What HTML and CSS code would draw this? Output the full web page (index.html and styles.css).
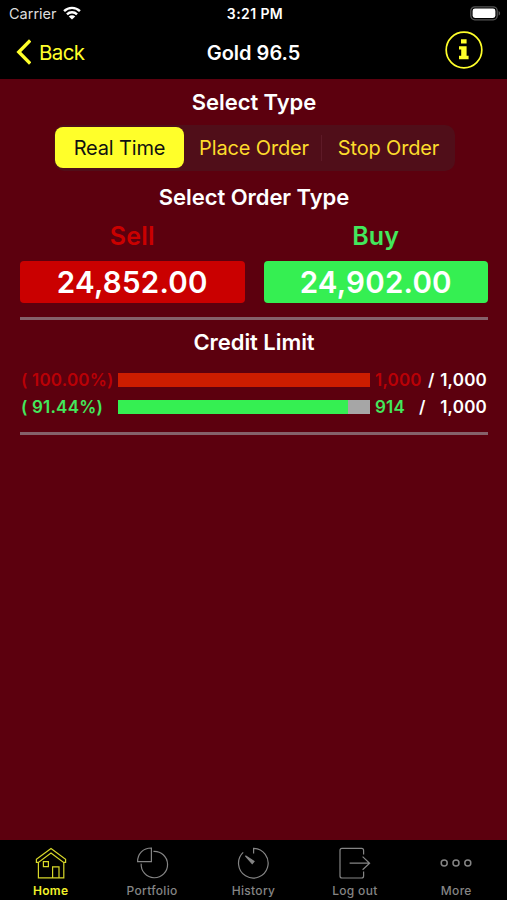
FILE: index.html
```html
<!DOCTYPE html>
<html lang="en">
<head>
    <meta charset="UTF-8">
    <meta name="viewport" content="width=device-width, initial-scale=1.0">
    <title>Gold 96.5</title>
    <link rel="stylesheet" href="styles.css">
</head>
<body>
    <header>
        <div class="status">
            <div class="carrier">
                <span>Carrier</span>
                <svg width="18" height="14" viewBox="0 0 20 15" fill="none" stroke="#fff" stroke-width="2.7">
                    <path d="M1.2 5.4a12.6 12.6 0 0 1 17.6 0" />
                    <path d="M4.4 9a8 8 0 0 1 11.2 0" />
                    <path d="M10 14.6L6.4 11.4a5 5 0 0 1 7.2 0z" fill="#fff" stroke="none" />
                </svg>
            </div>
            <span class="clock">3:21 PM</span>
            <svg class="battery" width="31" height="15" viewBox="0 0 31 15">
                <rect x="0.8" y="0.8" width="26.4" height="13" rx="4" fill="none" stroke="#555" stroke-width="1.3" />
                <rect x="2.6" y="2.6" width="22.8" height="9.4" rx="2.4" fill="#fff" />
                <path d="M28.6 5v4.6c2-0.8 2-3.8 0-4.6z" fill="#555" />
            </svg>
        </div>
        <nav class="navbar">
            <a class="back">
                <svg width="16" height="26" viewBox="0 0 16 26" fill="none" stroke="#ffff2a" stroke-width="3.4">
                    <path d="M15.2 1.4L3.8 13l11.4 11.6" />
                </svg>
                <span>Back</span>
            </a>
            <h1>Gold 96.5</h1>
            <svg class="info" width="38" height="38" viewBox="0 0 38 38">
                <circle cx="19" cy="19" r="17.8" fill="none" stroke="#ffff2a" stroke-width="1.7" />
                <path d="M16 8.200h5.600v4.400H16zM14 15.200h7.600v9.600h2v3.400H14v-3.400h2.200v-6.200H14z" fill="#ffff2a" />
            </svg>
        </nav>
    </header>

    <main>
        <h2>Select Type</h2>
        <div class="segments">
            <button class="segment active">Real Time</button>
            <button class="segment">Place Order</button>
            <button class="segment last">Stop Order</button>
        </div>

        <h2 class="order-title">Select Order Type</h2>
        <div class="prices">
            <div class="price sell">
                <h3>Sell</h3>
                <button>24,852.00</button>
            </div>
            <div class="price buy">
                <h3>Buy</h3>
                <button>24,902.00</button>
            </div>
        </div>

        <section class="credit">
            <h2>Credit Limit</h2>
            <div class="limit limit-sell">
                <span class="percent">( 100.00%)</span>
                <div class="bar"><div class="fill" style="width: 100%"></div></div>
                <span class="used">1,000</span>
                <span class="slash">/</span>
                <span class="total">1,000</span>
            </div>
            <div class="limit limit-buy">
                <span class="percent">( 91.44%)</span>
                <div class="bar"><div class="fill" style="width: 91.44%"></div></div>
                <span class="used">914</span>
                <span class="slash">/</span>
                <span class="total">1,000</span>
            </div>
        </section>
    </main>

    <footer>
        <a class="tab active">
            <svg width="34" height="34" viewBox="0 0 34 34">
                <path d="M2.4 13.2L17 2.6l14.6 10.6v3.2h-2L17 7 4.4 16.4h-2zM4.4 16.4v15.4h25.400V16.4M18.6 31.800V20.800h6.400v11M9.400 15.600h5v5h-5z" />
            </svg>
            <span>Home</span>
        </a>
        <a class="tab">
            <svg width="34" height="34" viewBox="0 0 34 34">
                <path d="M16.400 2v13.600H2.600C2.600 8 8 2 16.400 2zM18.400 5.400A13.200 13.200 0 1 1 6.200 17.600" />
            </svg>
            <span>Portfolio</span>
        </a>
        <a class="tab">
            <svg width="34" height="34" viewBox="0 0 34 34">
                <path d="M17.600 7.600V2.400A14.800 14.800 0 1 1 7.200 6.400" />
                <path class="hand" d="M9.400 9.800l8.600 5.600-1.800 2.200z" />
            </svg>
            <span>History</span>
        </a>
        <a class="tab">
            <svg width="34" height="34" viewBox="0 0 34 34">
                <path d="M25.600 8.400V4.400q0-2-2-2H4q-2 0-2 2v25.600q0 2 2 2h19.600q2 0 2-2v-4.600M11.600 17.200h20M24.600 10.600l7 6.600-7 6.600" />
            </svg>
            <span>Log out</span>
        </a>
        <a class="tab more">
            <svg width="34" height="34" viewBox="0 0 34 34">
                <circle cx="5.200" cy="17" r="3" />
                <circle cx="17" cy="17" r="3" />
                <circle cx="28.800" cy="17" r="3" />
            </svg>
            <span>More</span>
        </a>
    </footer>
</body>
</html>
```

FILE: styles.css
```css
* {
    box-sizing: border-box;
}

body {
    margin: 0;
    height: 900px;
    display: flex;
    flex-direction: column;
    background: #5c000e;
    color: #fff;
    font-family: Inter, "Liberation Sans", sans-serif;
}

h1, h2, h3 {
    margin: 0;
    font-weight: 600;
}

button {
    padding: 0;
    border: none;
    font-family: inherit;
}

svg {
    display: block;
}

header {
    height: 79px;
    background: #000;
}

.status {
    display: grid;
    grid-template-columns: 1fr auto 1fr;
    align-items: center;
    height: 27px;
    padding: 0 6px 0 9px;
    font-size: 14.5px;
}

.carrier {
    display: flex;
    align-items: center;
    column-gap: 6px;
    color: #ddd;
}

.carrier svg {
    margin-top: -2px;
}

.clock {
    font-weight: 600;
    font-size: 14px;
    letter-spacing: 0.4px;
}

.battery {
    justify-self: end;
}

.navbar {
    display: grid;
    grid-template-columns: 1fr auto 1fr;
    align-items: center;
    height: 50px;
    padding: 0 24px;
}

.back {
    display: flex;
    align-items: center;
    column-gap: 8px;
    margin-left: -9px;
    color: #ffff2a;
    font-size: 20.5px;
    letter-spacing: -0.6px;
}

h1 {
    font-size: 20px;
    line-height: 26px;
    padding-top: 1px;
}

.info {
    justify-self: end;
    margin-top: -4px;
}

main {
    flex: 1;
    padding: 10px 19px 0 20px;
}

h2 {
    font-size: 22px;
    line-height: 26px;
    text-align: center;
    letter-spacing: -0.05px;
}

.segments {
    display: grid;
    grid-template-columns: 130px 138px 133px;
    width: 401px;
    height: 46px;
    margin: 10px 0 0 34px;
    border-radius: 10px;
    background: #500e19;
}

.segment {
    background: none;
    color: #fddc2c;
    font-size: 20px;
    letter-spacing: -0.15px;
}

.segment:nth-child(2) {
    padding-left: 2px;
}

.segment.active {
    margin: 2px 0 3px 1px;
    border-radius: 8px;
    background: #ffff2a;
    color: #111;
}

.segment.last {
    margin: 10px 0 10px -1px;
    border-left: 1px solid #5e1a27;
}

.order-title {
    margin-top: 13px;
}

.prices {
    display: grid;
    grid-template-columns: 1fr 1fr;
    column-gap: 19px;
    padding: 11px 0 14px;
    border-bottom: 3px solid #85616a;
}

.price h3 {
    font-size: 25px;
    line-height: 30px;
    text-align: center;
    letter-spacing: 0.2px;
}

.price button {
    display: block;
    width: 100%;
    height: 42px;
    margin-top: 10px;
    padding-bottom: 1px;
    border-radius: 4px;
    color: #fff;
    font-size: 29.5px;
    font-weight: 600;
    letter-spacing: 0.25px;
}

.sell h3 {
    color: #ca0000;
}

.sell button {
    background: #ca0000;
}

.buy h3 {
    color: #43e85c;
}

.buy button {
    background: #35ef52;
}

.credit {
    padding: 9px 0 12px;
    border-bottom: 3px solid #85616a;
}

.limit {
    display: grid;
    grid-template-columns: 98px 252px 49px 13px 1fr;
    align-items: center;
    height: 27px;
    padding-right: 1px;
    font-size: 17px;
    font-weight: 600;
    letter-spacing: 0.2px;
}

.limit-sell {
    grid-template-columns: 98px 252px 58px 8px 1fr;
    margin-top: 11px;
}

.bar {
    height: 14px;
    background: #a6a6a6;
}

.fill {
    height: 100%;
}

.percent {
    padding-left: 1px;
}

.used {
    padding-left: 5px;
}

.total {
    text-align: right;
}

.limit-sell .percent, .limit-sell .used {
    color: #b90006;
}

.limit-sell .fill {
    background: #cc1d00;
}

.limit-buy .percent, .limit-buy .used {
    color: #43e85c;
}

.limit-buy .fill {
    background: #35ef52;
}

footer {
    display: grid;
    grid-template-columns: repeat(5, 1fr);
    height: 60px;
    background: #000;
}

.tab {
    display: flex;
    flex-direction: column;
    align-items: center;
    padding-top: 6px;
    color: #858585;
    font-size: 12px;
    font-weight: 500;
    line-height: 15px;
    letter-spacing: 0.3px;
}

.tab svg {
    margin-bottom: 3px;
    fill: none;
    stroke: #858585;
    stroke-width: 1.2;
}

.tab .hand {
    fill: #858585;
}

.tab.active {
    color: #f2f22a;
    font-weight: 600;
}

.tab.active svg {
    stroke: #d8d82a;
}

.more svg {
    stroke-width: 1.5;
}
```
